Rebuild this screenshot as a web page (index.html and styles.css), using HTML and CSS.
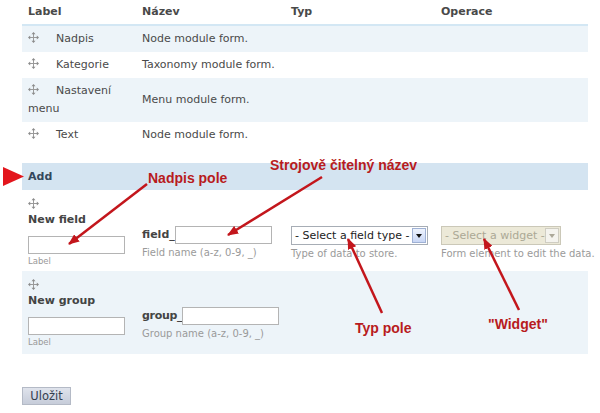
FILE: index.html
```html
<!DOCTYPE html>
<html lang="cs">

<head>
    <meta charset="UTF-8">
    <title>Správa polí</title>
    <link rel="stylesheet" href="styles.css">
</head>

<body>
    <div class="page">
        <table class="fields">
            <colgroup>
                <col class="col-label">
                <col class="col-name">
                <col class="col-type">
                <col class="col-ops">
            </colgroup>
            <thead>
                <tr>
                    <th>Label</th>
                    <th>Název</th>
                    <th>Typ</th>
                    <th>Operace</th>
                </tr>
            </thead>
            <tbody>
                <tr class="odd">
                    <td><span class="handle"><svg width="11" height="11" viewBox="0 0 11 11"><path d="M5.5 2v7M2 5.5h7" stroke="#9a9a9a" stroke-width="1"/><path d="M5.5 0l2 2.2h-4zM5.5 11l2-2.2h-4zM0 5.5l2.2-2v4zM11 5.5l-2.2-2v4z" fill="#8c8c8c"/></svg></span>Nadpis</td>
                    <td>Node module form.</td>
                    <td></td>
                    <td></td>
                </tr>
                <tr class="even">
                    <td><span class="handle"><svg width="11" height="11" viewBox="0 0 11 11"><path d="M5.5 2v7M2 5.5h7" stroke="#9a9a9a" stroke-width="1"/><path d="M5.5 0l2 2.2h-4zM5.5 11l2-2.2h-4zM0 5.5l2.2-2v4zM11 5.5l-2.2-2v4z" fill="#8c8c8c"/></svg></span>Kategorie</td>
                    <td>Taxonomy module form.</td>
                    <td></td>
                    <td></td>
                </tr>
                <tr class="odd">
                    <td><span class="handle"><svg width="11" height="11" viewBox="0 0 11 11"><path d="M5.5 2v7M2 5.5h7" stroke="#9a9a9a" stroke-width="1"/><path d="M5.5 0l2 2.2h-4zM5.5 11l2-2.2h-4zM0 5.5l2.2-2v4zM11 5.5l-2.2-2v4z" fill="#8c8c8c"/></svg></span>Nastavení menu</td>
                    <td>Menu module form.</td>
                    <td></td>
                    <td></td>
                </tr>
                <tr class="even">
                    <td><span class="handle"><svg width="11" height="11" viewBox="0 0 11 11"><path d="M5.5 2v7M2 5.5h7" stroke="#9a9a9a" stroke-width="1"/><path d="M5.5 0l2 2.2h-4zM5.5 11l2-2.2h-4zM0 5.5l2.2-2v4zM11 5.5l-2.2-2v4z" fill="#8c8c8c"/></svg></span>Text</td>
                    <td>Node module form.</td>
                    <td></td>
                    <td></td>
                </tr>
                <tr class="spacer">
                    <td colspan="4"></td>
                </tr>
                <tr class="region">
                    <td colspan="4">Add</td>
                </tr>
                <tr class="even add-row">
                    <td class="add-label">
                        <div class="handle-line"><svg width="11" height="11" viewBox="0 0 11 11"><path d="M5.5 2v7M2 5.5h7" stroke="#9a9a9a" stroke-width="1"/><path d="M5.5 0l2 2.2h-4zM5.5 11l2-2.2h-4zM0 5.5l2.2-2v4zM11 5.5l-2.2-2v4z" fill="#8c8c8c"/></svg></div>
                        <div class="add-title">New field</div>
                        <input class="text" type="text">
                        <div class="desc desc-small">Label</div>
                    </td>
                    <td class="add-cell">
                        <span class="prefix">field_</span><input class="text" type="text">
                        <div class="desc">Field name (a-z, 0-9, _)</div>
                    </td>
                    <td class="add-cell">
                        <div class="select select-type"><span class="select-text">- Select a field type -</span><span class="select-btn"></span></div>
                        <div class="desc">Type of data to store.</div>
                    </td>
                    <td class="add-cell">
                        <div class="select select-widget disabled"><span class="select-text">- Select a widget -</span><span class="select-btn"></span></div>
                        <div class="desc">Form element to edit the data.</div>
                    </td>
                </tr>
                <tr class="odd add-row add-group">
                    <td class="add-label">
                        <div class="handle-line"><svg width="11" height="11" viewBox="0 0 11 11"><path d="M5.5 2v7M2 5.5h7" stroke="#9a9a9a" stroke-width="1"/><path d="M5.5 0l2 2.2h-4zM5.5 11l2-2.2h-4zM0 5.5l2.2-2v4zM11 5.5l-2.2-2v4z" fill="#8c8c8c"/></svg></div>
                        <div class="add-title">New group</div>
                        <input class="text" type="text">
                        <div class="desc desc-small">Label</div>
                    </td>
                    <td class="add-cell">
                        <span class="prefix prefix-tight">group_</span><input class="text" type="text">
                        <div class="desc">Group name (a-z, 0-9, _)</div>
                    </td>
                    <td class="add-cell"></td>
                    <td class="add-cell"></td>
                </tr>
            </tbody>
        </table>

        <div class="actions">
            <button class="submit">Uložit</button>
        </div>

        <!-- annotations drawn over the form -->
        <svg class="annotations" width="600" height="413" viewBox="0 0 600 413">
            <defs>
                <marker id="head" markerWidth="11" markerHeight="9" refX="10" refY="4.5" orient="auto" markerUnits="userSpaceOnUse">
                    <path d="M0 0L11 4.5L0 9z" fill="#c3161c"/>
                </marker>
            </defs>
            <polygon points="3,167 24,176.5 3,186" fill="#e3161d"/>
            <g stroke="#c3161c" stroke-width="2.5" marker-end="url(#head)">
                <line x1="147" y1="184" x2="69" y2="244"/>
                <line x1="322" y1="177" x2="228" y2="235"/>
                <line x1="382" y1="313" x2="348" y2="239"/>
                <line x1="519" y1="310" x2="484" y2="239"/>
            </g>
        </svg>
        <span class="note note-label">Nadpis pole</span>
        <span class="note note-name">Strojově čitelný název</span>
        <span class="note note-type">Typ pole</span>
        <span class="note note-widget">"Widget"</span>
    </div>
</body>

</html>
```

FILE: styles.css
```css
* {
    margin: 0;
    padding: 0;
    box-sizing: border-box;
}

body {
    background: #fff;
    font-family: 'DejaVu Sans', Verdana, sans-serif;
    font-size: 11px;
    color: #494949;
}

.page {
    position: relative;
    width: 600px;
    height: 413px;
    overflow: hidden;
}

.fields {
    margin-left: 22px;
    width: 566px;
    border-collapse: collapse;
    table-layout: fixed;
}

.col-label {
    width: 114px;
}

.col-name {
    width: 149px;
}

.col-type {
    width: 150px;
}

.col-ops {
    width: 153px;
}

.fields th {
    text-align: left;
    font-weight: bold;
    color: #494949;
    padding: 3px 6px;
    line-height: 18px;
    border-bottom: 2px solid #d3e7f4;
}

.fields td {
    padding: 4px 6px;
    line-height: 18px;
    vertical-align: middle;
    color: #4a4a4a;
}

.fields tr.odd td {
    background-color: #edf4f9;
}

.fields tr.even td {
    background-color: #fff;
}

.handle {
    display: inline-block;
    width: 11px;
    margin-right: 17px;
    vertical-align: -1px;
    line-height: 0;
}

.fields tr.spacer td {
    height: 15px;
    padding: 0;
}

.fields tr.region td {
    background-color: #d4e4f1;
    font-weight: bold;
    color: #34475c;
    line-height: 19px;
}

/* add field / add group rows */
.fields td.add-label {
    vertical-align: top;
    padding-bottom: 4px;
}

.add-group td.add-label {
    padding-bottom: 6px;
}

.handle-line {
    height: 18px;
    line-height: 0;
    padding-top: 4px;
}

.add-title {
    font-weight: bold;
    line-height: 16px;
    color: #444;
}

.add-label .text {
    display: block;
    margin-top: 8px;
}

.fields td.add-cell {
    vertical-align: top;
    padding-top: 36px;
    white-space: nowrap;
}

.prefix {
    font-weight: bold;
    color: #444;
}

.prefix-tight {
    letter-spacing: -0.3px;
}

.text {
    width: 97px;
    height: 18px;
    border: 1px solid #b4b4b4;
    background: #fff;
    vertical-align: middle;
}

.desc {
    font-size: 10px;
    line-height: 12px;
    color: #9a9a9a;
    margin-top: 3px;
}

.desc-small {
    font-size: 8.5px;
    margin-top: 1px;
}

.select {
    display: flex;
    align-items: center;
    justify-content: space-between;
    height: 19px;
    border: 1px solid #a7adb5;
    background: #fff;
    padding: 0 1px 0 3px;
    color: #222;
}

.select-type {
    width: 137px;
}

.select-widget {
    width: 120px;
}

.select-text {
    line-height: 17px;
}

.select-btn {
    position: relative;
    width: 14px;
    height: 15px;
    border: 1px solid #9fb1d4;
    background: linear-gradient(#eef3fd, #c8d6f5);
}

.select-btn::after {
    content: '';
    position: absolute;
    left: 3px;
    top: 5px;
    border-left: 3.5px solid transparent;
    border-right: 3.5px solid transparent;
    border-top: 4px solid #111;
}

.select.disabled {
    background: #ece9d8;
    border-color: #cbc8b8;
    color: #aba895;
}

.select.disabled .select-btn {
    border-color: #cfcdc2;
    background: #f4f3ee;
}

.select.disabled .select-btn::after {
    border-top-color: #aca899;
}

.actions {
    margin: 33px 0 0 22px;
}

.submit {
    width: 49px;
    height: 18px;
    border: 1px solid #b4bac6;
    background: linear-gradient(#dfe3ec, #c6ccd9);
    font-family: 'DejaVu Sans', Verdana, sans-serif;
    font-size: 11.5px;
    color: #34404f;
}

/* red annotations */
.annotations {
    position: absolute;
    left: 0;
    top: 0;
    pointer-events: none;
}

.note {
    position: absolute;
    font-family: 'Liberation Sans', Arial, sans-serif;
    font-weight: bold;
    font-size: 14px;
    line-height: 16px;
    color: #b81b20;
    white-space: nowrap;
}

.note-label {
    left: 148px;
    top: 170px;
}

.note-name {
    left: 270px;
    top: 157px;
}

.note-type {
    left: 355px;
    top: 320px;
}

.note-widget {
    left: 488px;
    top: 316px;
}
```
